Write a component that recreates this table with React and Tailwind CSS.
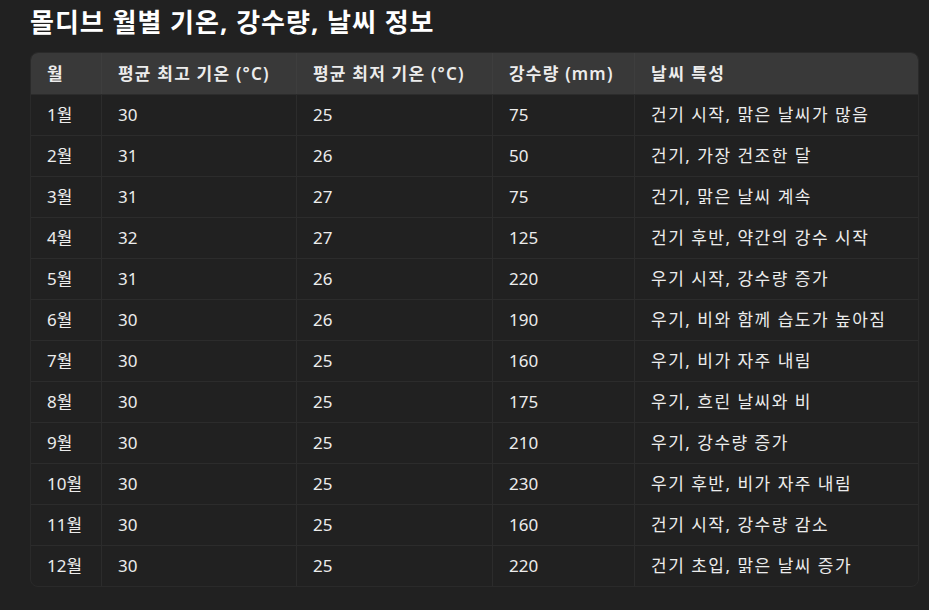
import React from 'react';

const rows = [
  ['1월', '30', '25', '75', '건기 시작, 맑은 날씨가 많음'],
  ['2월', '31', '26', '50', '건기, 가장 건조한 달'],
  ['3월', '31', '27', '75', '건기, 맑은 날씨 계속'],
  ['4월', '32', '27', '125', '건기 후반, 약간의 강수 시작'],
  ['5월', '31', '26', '220', '우기 시작, 강수량 증가'],
  ['6월', '30', '26', '190', '우기, 비와 함께 습도가 높아짐'],
  ['7월', '30', '25', '160', '우기, 비가 자주 내림'],
  ['8월', '30', '25', '175', '우기, 흐린 날씨와 비'],
  ['9월', '30', '25', '210', '우기, 강수량 증가'],
  ['10월', '30', '25', '230', '우기 후반, 비가 자주 내림'],
  ['11월', '30', '25', '160', '건기 시작, 강수량 감소'],
  ['12월', '30', '25', '220', '건기 초입, 맑은 날씨 증가'],
];

const headers = ['월', '평균 최고 기온 (°C)', '평균 최저 기온 (°C)', '강수량 (mm)', '날씨 특성'];
const widths = ['w-[70px] shrink-0', 'w-[195px] shrink-0', 'w-[196px] shrink-0', 'w-[142px] shrink-0', 'flex-1 tracking-[1.5px]'];

export default function App() {
  return (
    <div
      className="w-[929px] h-[610px] bg-[#212121] text-[#ececec] px-[30px] pt-[5px] overflow-hidden"
      style={{ fontFamily: '"Segoe UI", "Noto Sans", "Noto Sans CJK KR", sans-serif' }}
    >
      <h1 className="text-[26px] font-bold text-white leading-[34px] tracking-[1px] mb-[13px]">
        몰디브 월별 기온, 강수량, 날씨 정보
      </h1>
      <div className="w-[889px] rounded-lg border border-[#2a2a2a] overflow-hidden">
        <div className="flex h-[41px] bg-[#393939] items-center font-semibold text-[17px] tracking-[1.2px]">
          {headers.map((h, i) => (
            <div key={i} className={`${widths[i]} h-full flex items-center px-4 whitespace-nowrap ${i > 0 ? 'border-l border-[#3e3e3e]' : ''}`}>
              {h}
            </div>
          ))}
        </div>
        {rows.map((r, ri) => (
          <div key={ri} className="flex h-[41px] border-t border-[#2c2c2c] text-[17px]">
            {r.map((c, i) => (
              <div key={i} className={`${widths[i]} h-full flex items-center px-4 whitespace-nowrap ${i > 0 ? 'border-l border-[#2c2c2c]' : ''}`}>
                {c}
              </div>
            ))}
          </div>
        ))}
      </div>
    </div>
  );
}
